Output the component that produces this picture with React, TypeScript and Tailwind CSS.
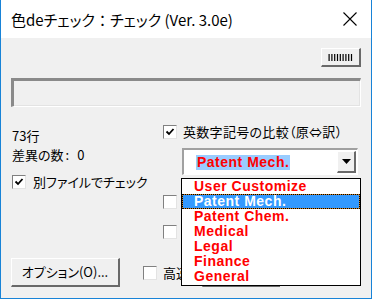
import React from "react";

const jp = "font-['Noto_Sans_CJK_JP',sans-serif] [font-feature-settings:'palt']";

function CheckBox({ checked = false }: { checked?: boolean }) {
	return (
		<span className="flex h-[14px] w-[14px] shrink-0 items-center justify-center border-t border-l border-[#808080] border-b border-r border-b-[#e3e3e3] border-r-[#e3e3e3] bg-white">
			{checked && (
				<svg width="10" height="10" viewBox="0 0 10 10">
					<path d="M1.5 4.5 L4 7 L8.5 2" fill="none" stroke="#000" strokeWidth="1.8" />
				</svg>
			)}
		</span>
	);
}

const options = [
	"User Customize",
	"Patent Mech.",
	"Patent Chem.",
	"Medical",
	"Legal",
	"Finance",
	"General",
];

export default function App() {
	return (
		<div className={`relative flex h-[299px] w-[372px] flex-col overflow-hidden border-x border-b border-[#1883d7] bg-[#f0f0f0] text-black ${jp}`}>
			{/* Title bar */}
			<div className="flex h-[38px] shrink-0 items-center justify-between bg-white pl-[10px] pr-[14px]">
				<span className="text-[15px] leading-none">
					色deチェック<span className="[font-feature-settings:normal]">：</span>チェック (Ver. 3.0e)
				</span>
				<svg width="14" height="14" viewBox="0 0 14 14">
					<path d="M0.5 0.5 L13.5 13.5 M13.5 0.5 L0.5 13.5" stroke="#000" strokeWidth="1.1" />
				</svg>
			</div>

			<div className="flex flex-1 flex-col px-[10px] text-[13px]">
				{/* small button */}
				<div className="mt-[10px] flex justify-end">
					<div className="flex h-[19px] w-[40px] items-center justify-center border-t border-l border-white border-r-2 border-b-2 border-r-[#696969] border-b-[#696969] bg-[#f0f0f0]">
						<svg width="26" height="7" viewBox="0 0 26 7">
							{Array.from({ length: 9 }).map((_, i) => (
								<rect key={i} x={i * 2.8 + 0.5} y="0" width="1.2" height="7" fill="#000" />
							))}
						</svg>
					</div>
				</div>

				{/* status box */}
				<div className="mt-[11px] flex h-[29px] border-t-[3px] border-l-[3px] border-[#8a8a8a] border-b border-r border-b-white border-r-white">
					<div className="flex-1 border-b border-r border-[#e3e3e3]" />
				</div>

				<div className="flex">
					<div className="w-[152px]">
						<div className="mt-[21px] ml-[1px] h-4 leading-4">73行</div>
						<div className="mt-[3px] ml-[1px] h-4 leading-4">
							差異の数<span className="ml-[2px]">:</span>
							<span className="ml-[8px]">0</span>
						</div>
						<div className="mt-[11px] ml-[1px] flex h-4 items-center gap-[7px]">
							<CheckBox checked />
							<span className="leading-4">別ファイルでチェック</span>
						</div>
					</div>

					<div className="flex-1">
						<div className="mt-[17px] flex h-4 items-center gap-[6px]">
							<CheckBox checked />
							<span className="leading-4 tracking-[0.3px]">英数字記号の比較（原⇔訳）</span>
						</div>

						{/* combobox */}
						<div className="ml-[19px] mt-[8px] flex h-[27px] w-[176px] items-center border-t-2 border-l-2 border-[#a0a0a0] border-b border-r border-b-white border-r-white bg-white">
							<span className="ml-[12px] bg-[#99ccff] px-[1px] text-[14px] font-bold leading-[15px] tracking-[0.5px] text-[#ff0000] font-['Liberation_Sans',sans-serif]">
								Patent Mech.
							</span>
							<div className="ml-auto mr-[1px] flex h-[22px] w-[19px] items-center justify-center border-t border-l border-white border-r-2 border-b-2 border-r-[#696969] border-b-[#696969] bg-[#f0f0f0]">
								<svg width="9" height="5" viewBox="0 0 9 5">
									<path d="M0 0 H9 L4.5 5 Z" fill="#000" />
								</svg>
							</div>
						</div>

						<div className="mt-[20px]">
							<CheckBox />
						</div>
						<div className="mt-[16px]">
							<CheckBox />
						</div>
					</div>
				</div>

				{/* bottom row */}
				<div className="mt-[19px] flex items-center">
					<div className="flex h-[29px] w-[109px] items-center justify-center border-t border-l border-white border-r-2 border-b-2 border-r-[#696969] border-b-[#696969] bg-[#f0f0f0]">
						オプション(O)...
					</div>
					<div className="ml-[23px] flex items-center gap-[6px]">
						<CheckBox />
						<span>高速</span>
					</div>
					<div className="ml-[13px] h-[29px] w-[78px] border-t border-l border-white border-r-2 border-b-2 border-r-[#696969] border-b-[#696969]" />
				</div>
			</div>

			{/* open dropdown list */}
			<div className="absolute left-[180px] top-[178px] w-[180px] border border-black bg-white pb-[1px] font-['Liberation_Sans',sans-serif] text-[14px] font-bold tracking-[0.5px]">
				{options.map((o) =>
					o === "Patent Mech." ? (
						<div key={o} className="h-[15px] border border-dotted border-black bg-[#d08020]">
							<div className="h-full bg-[#3399ff] pl-[11px] leading-[13px] text-white">{o}</div>
						</div>
					) : (
						<div key={o} className="h-[15px] pl-[12px] leading-[15px] text-[#ff0000]">
							{o}
						</div>
					),
				)}
			</div>
		</div>
	);
}
